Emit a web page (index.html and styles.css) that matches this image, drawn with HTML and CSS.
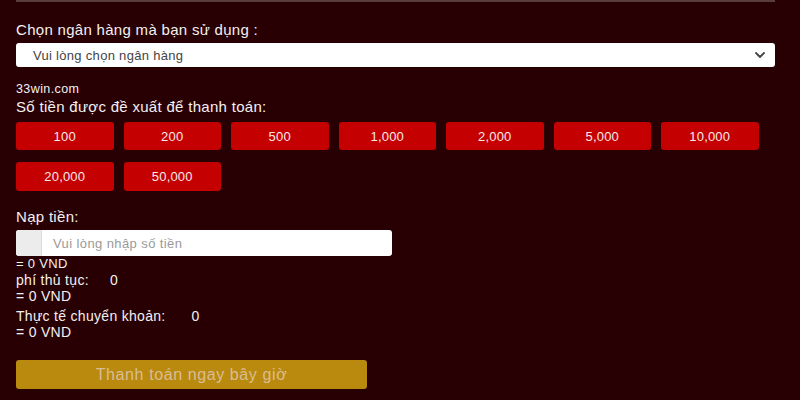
FILE: index.html
```html
<!DOCTYPE html>
<html lang="vi">
<head>
<meta charset="utf-8">
<title>Nạp tiền</title>
<link rel="stylesheet" href="styles.css">
</head>
<body>
<div class="page">
  <div class="topline"></div>
  <div class="label first">Chọn ngân hàng mà bạn sử dụng :</div>
  <div class="select">
    <span class="select-text">Vui lòng chọn ngân hàng</span>
    <svg class="chev" width="10" height="6" viewBox="0 0 10 6"><path d="M1 1 L5 5 L9 1" fill="none" stroke="#444" stroke-width="1.8" stroke-linecap="round" stroke-linejoin="round"/></svg>
  </div>
  <div class="site">33win.com</div>
  <div class="label">Số tiền được đề xuất để thanh toán:</div>
  <div class="amounts">
    <div class="amt">100</div>
    <div class="amt">200</div>
    <div class="amt">500</div>
    <div class="amt">1,000</div>
    <div class="amt">2,000</div>
    <div class="amt">5,000</div>
    <div class="amt">10,000</div>
    <div class="amt">20,000</div>
    <div class="amt">50,000</div>
  </div>
  <div class="label deposit">Nạp tiền:</div>
  <div class="input">
    <div class="addon"></div>
    <span class="placeholder">Vui lòng nhập số tiền</span>
  </div>
  <div class="info">= 0 VND</div>
  <div class="info strong">phí thủ tục:<span class="val">0</span></div>
  <div class="info strong">= 0 VND</div>
  <div class="info strong gap">Thực tế chuyển khoản:<span class="val wide">0</span></div>
  <div class="info strong">= 0 VND</div>
  <div class="pay">Thanh toán ngay bây giờ</div>
</div>
</body>
</html>
```

FILE: styles.css
```css
html, body {
  margin: 0;
  padding: 0;
  background: #280003;
  font-family: "Liberation Sans", Arial, sans-serif;
  color: #ffffff;
}
.page {
  padding: 0 25px 0 16px;
  height: 400px;
  box-sizing: border-box;
}
.topline {
  height: 2px;
  background: #5a3c3c;
}
.label {
  font-size: 15px;
  line-height: 16px;
  letter-spacing: 0.3px;
  color: #f4f0f0;
}
.label.first {
  margin-top: 20px;
}
.select {
  margin-top: 5px;
  height: 24px;
  background: #ffffff;
  border-radius: 3px;
  display: flex;
  align-items: center;
  justify-content: space-between;
  padding: 0 10px 0 17px;
}
.select-text {
  font-size: 13px;
  letter-spacing: 0.3px;
  color: #444;
}
.site {
  margin-top: 15px;
  font-size: 12.5px;
  line-height: 14px;
  letter-spacing: 0.4px;
  color: #f4f0f0;
}
.site + .label {
  margin-top: 3px;
}
.amounts {
  margin-top: 7px;
  display: grid;
  grid-template-columns: repeat(7, 97.5px);
  column-gap: 10px;
  row-gap: 12px;
}
.amt {
  height: 28px;
  background: #c40000;
  border-radius: 3px;
  display: flex;
  align-items: center;
  justify-content: center;
  font-size: 13px;
  letter-spacing: 0.2px;
  color: #f5eaea;
}
.amt:nth-child(n+8) {
  height: 29px;
}
.label.deposit {
  margin-top: 18px;
}
.input {
  margin-top: 5px;
  width: 376px;
  height: 26px;
  background: #ffffff;
  border-radius: 3px;
  display: flex;
  align-items: center;
  overflow: hidden;
}
.addon {
  width: 25px;
  height: 100%;
  background: #ececec;
  border-right: 1px solid #dcdcdc;
}
.placeholder {
  margin-left: 11px;
  font-size: 13px;
  letter-spacing: 0.4px;
  color: #9a9a9a;
}
.info {
  font-size: 13px;
  line-height: 16px;
  letter-spacing: 0.3px;
  color: #f4f0f0;
}
.info.strong {
  font-size: 14px;
}
.info.gap {
  margin-top: 4px;
}
.val {
  margin-left: 21px;
}
.val.wide {
  margin-left: 26px;
}
.pay {
  margin-top: 20px;
  width: 351px;
  height: 29px;
  background: #b98a0e;
  border-radius: 3px;
  display: flex;
  align-items: center;
  justify-content: center;
  font-size: 16px;
  letter-spacing: 0.6px;
  color: #d9bd94;
}
```
